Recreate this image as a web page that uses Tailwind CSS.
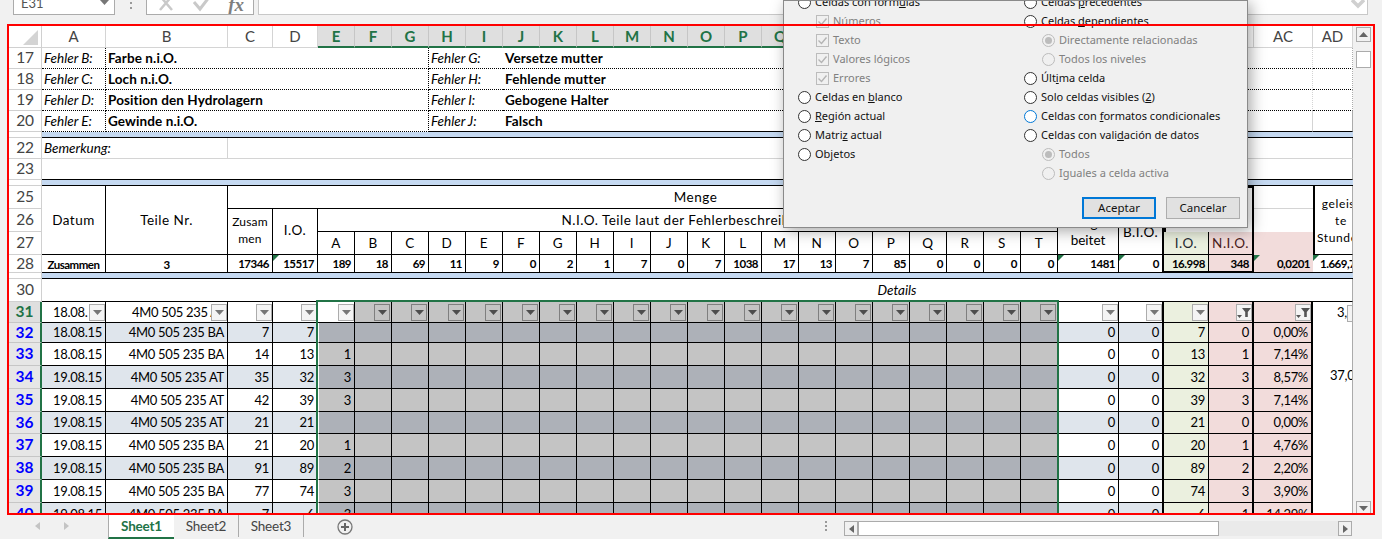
<!DOCTYPE html>
<html lang="en">
<head>
<meta charset="UTF-8">
<title>Excel sheet</title>
<script src="https://cdn.jsdelivr.net/npm/@tailwindcss/browser@4"></script>
</head>
<body class="bg-[#f1f1f1] overflow-hidden">
<div id="page" class="relative w-[1382px] h-[539px] overflow-hidden bg-[#f1f1f1] font-['Lato',sans-serif] text-black">

  <!-- formula bar, cut off by the top of the picture -->
  <div class="h-[26px] pl-[13px] flex items-start gap-[4px] text-[#555]">
    <div class="w-[102px] h-[15px] bg-white border border-t-0 border-[#ababab] flex items-end justify-between px-[7px] overflow-hidden">
      <span class="text-[13px] leading-[15px] mb-[3px]">E31</span>
      <svg width="9" height="5" viewBox="0 0 9 5" class="mb-[9px] mr-[-2px]"><path d="M0 0h9L4.500 5z" fill="#777"/></svg>
    </div>
    <div class="w-[23px] h-[15px] flex justify-center gap-0 text-[#888]">
      <div class="flex flex-col gap-[3px] pt-[2px]"><span class="w-[2px] h-[2px] bg-[#999]"></span><span class="w-[2px] h-[2px] bg-[#999]"></span></div>
    </div>
    <div class="w-[108px] h-[15px] bg-white border border-t-0 border-[#ababab] flex items-start justify-between pl-[10px] pr-[9px] overflow-hidden">
      <svg width="18" height="12" viewBox="0 0 18 12"><path d="M3-4 15 10M15-4 3 10" stroke="#c9c9c9" stroke-width="2.500" fill="none"/></svg>
      <svg width="20" height="12" viewBox="0 0 20 12"><path d="M2 2l6 7L18-4" stroke="#c9c9c9" stroke-width="3" fill="none"/></svg>
      <span class="font-['Liberation_Serif',serif] italic font-bold text-[19px] leading-[10px] text-[#7f7f7f]">fx</span>
    </div>
    <div class="w-[1110px] h-[15px] bg-white border border-t-0 border-[#c8c8c8] flex justify-end pr-[2px]">
      <svg width="14" height="12" viewBox="0 0 14 12"><path d="M1 0l6 6 6-6" stroke="#d0d0d0" stroke-width="3.500" fill="none"/></svg>
    </div>
  </div>

  <!-- sheet + vertical scrollbar -->
  <div class="flex h-[489px]">
    <div id="sheet" class="ml-[9px] w-[1344px] h-[489px] overflow-hidden bg-white grid grid-cols-[33px_64px_122px_45px_45px_repeat(20,37px)_61px_45px_45px_45px_59px_40px] grid-rows-[22px_21px_21px_21px_21px_6px_21px_21px_6px_23px_23px_23px_18px_6px_23px_21px_20px_23px_23px_23px_22px_23px_23px_23px_23px]"></div>
    <div class="w-[29px] pl-[3px] pt-[1px] flex flex-col">
      <div class="w-[15px] h-[15px] border border-[#ababab] bg-[#f1f1f1] flex items-center justify-center">
        <svg width="9" height="5" viewBox="0 0 9 5"><path d="M0 5h9L4.500 0z" fill="#666"/></svg>
      </div>
      <div class="w-[15px] h-[17px] mt-[9px] border border-[#ababab] bg-white"></div>
      <div class="flex-1"></div>
      <div class="w-[15px] h-[14px] border border-[#ababab] bg-[#f1f1f1] flex items-center justify-center">
        <svg width="9" height="5" viewBox="0 0 9 5"><path d="M0 0h9L4.500 5z" fill="#666"/></svg>
      </div>
    </div>
  </div>

  <!-- tabs + horizontal scrollbar -->
  <div class="h-[24px] flex items-start text-[13.500px] tracking-[-0.2px] text-[#444]">
    <div class="w-[108px] h-[22px] flex items-center gap-[24px] pl-[35px]">
      <svg width="5" height="8" viewBox="0 0 5 8"><path d="M5 0v8L0 4z" fill="#c4c4c4"/></svg>
      <svg width="5" height="8" viewBox="0 0 5 8"><path d="M0 0v8l5-4z" fill="#c4c4c4"/></svg>
    </div>
    <div class="w-[66px] h-[24px] bg-white border-l border-[#ababab] border-b-2 border-b-[#217346] flex items-center justify-center font-bold text-[#217346]">Sheet1</div>
    <div class="w-[65px] h-[22px] border-r border-[#ababab] flex items-center justify-center">Sheet2</div>
    <div class="w-[65px] h-[22px] border-r border-[#ababab] flex items-center justify-center">Sheet3</div>
    <div class="w-[33px]"></div>
    <svg width="16" height="16" viewBox="0 0 16 16" class="mt-[4px]"><circle cx="8" cy="8" r="7" fill="none" stroke="#777" stroke-width="1.300"/><path d="M8 4v8M4 8h8" stroke="#666" stroke-width="2"/></svg>
    <div class="w-[491px] h-[22px] flex justify-end items-center pr-[17px]">
      <div class="flex flex-col gap-[2px]"><span class="w-[2px] h-[2px] bg-[#999]"></span><span class="w-[2px] h-[2px] bg-[#999]"></span><span class="w-[2px] h-[2px] bg-[#999]"></span></div>
    </div>
    <div class="w-[508px] h-[15px] mt-[6px] flex bg-[#f1f1f1]">
      <div class="w-[14px] border border-[#ababab] flex items-center justify-center"><svg width="5" height="8" viewBox="0 0 5 8"><path d="M5 0v8L0 4z" fill="#666"/></svg></div>
      <div class="w-[361px] bg-white border border-[#ababab]"></div>
      <div class="flex-1 bg-[#eaeaea]"></div>
      <div class="w-[14px] border border-[#ababab] flex items-center justify-center"><svg width="5" height="8" viewBox="0 0 5 8"><path d="M0 0v8l5-4z" fill="#666"/></svg></div>
    </div>
  </div>

  <!-- selection outline E31:X40, runs on below the visible rows -->
  <div class="absolute left-[316px] top-[300px] w-[743px] h-[214px] border-2 border-b-0 border-[#217346] pointer-events-none"></div>

  <!-- Ir a Especial dialog -->
  <div id="dialog" class="absolute left-[783px] top-0 w-[465px] h-[228px] bg-[#f0f0f0] border border-[#8a8a8a] shadow-[3px_3px_14px_rgba(0,0,0,0.35)] overflow-hidden font-['Noto_Sans',sans-serif] text-[11px] text-[#111]">
    <div class="flex -mt-[8px]">
      <div id="dlgLeft" class="w-[226px] pl-[14px] flex flex-col"></div>
      <div id="dlgRight" class="flex-1 pl-[14px] flex flex-col"></div>
    </div>
    <div class="absolute right-[7px] bottom-[8px] flex gap-[10px] text-[11.500px]">
      <div class="w-[74px] h-[22px] bg-[#e1e1e1] border-2 border-[#0078d7] flex items-center justify-center">Aceptar</div>
      <div class="w-[74px] h-[22px] bg-[#e1e1e1] border border-[#adadad] flex items-center justify-center">Cancelar</div>
    </div>
  </div>

  <!-- red marker frame from the screenshot -->
  <div class="absolute left-[7px] top-[24px] w-[1368px] h-[491px] border-2 border-[#ff0000] pointer-events-none"></div>
</div>

<script>
  const sheet = document.getElementById('sheet');

  // adds one grid cell
  function cell(cls, html) {
    const d = document.createElement('div');
    d.className = cls;
    d.innerHTML = html === undefined ? '' : html;
    sheet.appendChild(d);
    return d;
  }

  const BASE = 'relative flex items-center overflow-hidden whitespace-nowrap pt-[1px] ';
  const SIZE = 'text-[13px] tracking-[-0.3px] ';
  const BOX = 'border-b border-r border-black ';
  const RIGHT = BASE + 'justify-end pr-[3px] ' + BOX;
  const NUM = RIGHT + SIZE;
  const MID = BASE + 'justify-center text-center leading-[17px] ' + BOX;
  const BOLD = 'text-[11.500px] tracking-[-0.5px] font-bold ';
  const HEAD = 'text-[13.500px] tracking-[0.5px] ';
  const TICK = '<span class="absolute left-0 top-0 w-0 h-0 border-t-[6px] border-r-[6px] border-t-[#217346] border-r-transparent"></span>';

  function rowHead(label) {
    cell('flex items-center justify-center bg-white border-r border-b border-[#d0d0d0] text-[15.500px] tracking-[-0.3px] text-[#444] overflow-hidden', label);
  }

  function filterBtn(dark, funnel) {
    const box = dark
      ? 'absolute right-[1px] bottom-[1px] w-[16px] h-[17px] border border-[#7f7f7f] flex items-center justify-center'
      : 'absolute right-0 bottom-[1px] w-[16px] h-[17px] bg-[#f4f4f4] border border-[#acacac] flex items-center justify-center';
    const icon = funnel
      ? '<svg width="14" height="11" viewBox="0 0 14 11"><path d="M0 8h5L2.500 11zM5 1h9L10.800 5v5H8.200V5z" fill="#555"/></svg>'
      : '<svg width="9" height="5" viewBox="0 0 9 5"><path d="M0 0h9L4.500 5z" fill="' + (dark ? '#4d4d4d' : '#777') + '"/></svg>';
    return '<span class="' + box + '">' + icon + '</span>';
  }

  // column letters
  cell('relative bg-white border-r border-b border-[#d0d0d0]', '<svg class="absolute right-[3px] bottom-[2px]" width="15" height="15" viewBox="0 0 15 15"><path d="M15 0v15H0z" fill="#d4d4d4"/></svg>');
  const columns = ['A','B','C','D','E','F','G','H','I','J','K','L','M','N','O','P','Q','R','S','T','U','V','W','X','Y','Z','AA','AB','AC','AD'];
  columns.forEach((c, i) => {
    const selected = i >= 4 && i <= 23;
    cell(selected
      ? 'flex items-center justify-center bg-[#dfdfdf] border-r border-[#c6c6c6] border-b-2 border-b-[#217346] text-[15px] font-bold text-[#217346]'
      : 'flex items-center justify-center bg-white border-r border-b border-[#d4d4d4] text-[15px] text-[#444]', c);
  });

  // rows 17-20: error legend
  const legend = [
    ['17','Fehler B:','Farbe n.i.O.','Fehler G:','Versetze mutter'],
    ['18','Fehler C:','Loch n.i.O.','Fehler H:','Fehlende mutter'],
    ['19','Fehler D:','Position den Hydrolagern','Fehler I:','Gebogene Halter'],
    ['20','Fehler E:','Gewinde n.i.O.','Fehler J:','Falsch']
  ];
  legend.forEach((r, i) => {
    const line = i === 3 ? 'border-b border-b-black ' : 'border-b border-dotted border-b-black ';
    const edge = 'border-r border-dotted border-r-black ';
    const txt = 'flex items-center overflow-hidden whitespace-nowrap pt-[1px] pl-[2px] ';
    rowHead(r[0]);
    cell(txt + line + edge + 'italic text-[13.500px]', r[1]);
    cell('col-span-6 ' + txt + line + edge + 'font-bold text-[13.500px] tracking-[0.1px]', r[2]);
    cell('col-span-2 ' + txt + line + 'italic text-[13.500px]', r[3]);
    cell('col-span-20 pl-[2px] pt-[1px] border-r border-r-[#d4d4d4] flex items-center overflow-hidden whitespace-nowrap ' + line + 'font-bold text-[13.500px] tracking-[0.1px]', r[4]);
    cell(line + 'border-r border-r-[#ababab]');
  });

  // rows 21-24
  function blueRow() {
    rowHead('');
    cell('col-span-30 bg-[#c5d9f1] border-b border-black');
  }
  blueRow();
  rowHead('22');
  cell('col-span-2 flex items-center pt-[1px] pl-[2px] italic text-[13.500px] border-r border-b border-[#d4d4d4]', 'Bemerkung:');
  cell('col-span-28 border-b border-[#d4d4d4] border-r border-r-[#ababab]');
  rowHead('23');
  cell('col-span-30 border-b border-black border-r border-r-[#ababab]');
  blueRow();

  // rows 25-28: table head
  rowHead('25');
  cell('row-span-3 ' + MID + HEAD, 'Datum');
  cell('row-span-3 ' + MID + HEAD, 'Teile Nr.');
  cell('col-span-24 ' + MID + HEAD, 'Menge');
  cell('col-span-2 row-span-2 border-t-2 border-x-2 border-black');
  cell('border-b border-[#d4d4d4]');
  cell('row-span-3 ' + BASE + 'justify-start text-center leading-[17px] pl-[2px] border-b border-l-2 border-black border-r border-r-[#ababab] text-[12px] tracking-[0.6px]', '<span>geleist<br>te<br>Stunden</span>');

  rowHead('26');
  cell('row-span-2 ' + MID + 'text-[12px] tracking-[0.2px] pb-[4px]', 'Zusam<br>men');
  cell('row-span-2 ' + MID + HEAD + 'pb-[4px]', 'I.O.');
  cell('col-span-20 ' + MID + HEAD, 'N.I.O. Teile laut der Fehlerbeschreibung');
  cell('row-span-2 ' + MID + 'text-[13.500px]', 'Nachgear<br>beitet');
  cell('row-span-2 ' + MID + 'border-r-2 ' + HEAD, 'B.I.O.');
  cell('');

  rowHead('27');
  ['A','B','C','D','E','F','G','H','I','J','K','L','M','N','O','P','Q','R','S','T'].forEach(c => cell(MID + HEAD, c));
  cell(MID + 'bg-[#ebf0df] ' + HEAD + 'text-[#1f2a33]', 'I.O.');
  cell(MID + 'bg-[#f2dcdb] border-r-2 ' + HEAD + 'text-[#4a2020]', 'N.I.O.');
  cell('bg-[#f2dcdb]');

  rowHead('28');
  cell(MID + BOLD, 'Zusammen');
  cell(MID + BOLD, '3');
  cell(RIGHT + BOLD, '17346');
  cell(RIGHT + BOLD, TICK + '15517');
  [189,18,69,11,9,0,2,1,7,0,7,1038,17,13,7,85,0,0,0,0].forEach(v => cell(RIGHT + BOLD, v));
  cell(RIGHT + BOLD, TICK + '1481');
  cell(RIGHT + BOLD + 'border-r-2', TICK + '0');
  cell(RIGHT + BOLD + 'bg-[#ebf0df] border-b-2', '16.998');
  cell(RIGHT + BOLD + 'bg-[#f2dcdb] border-r-2 border-b-2', '348');
  cell(RIGHT + BOLD + 'bg-[#f2dcdb] border-r-0', TICK + '0,0201');
  cell(BASE + BOLD + 'pl-[7px] border-b border-black border-r border-r-[#ababab]', TICK + '1.669,7');

  blueRow();

  // row 30
  rowHead('30');
  cell('col-span-30 flex items-center justify-center pl-[400px] italic text-[13.500px] border-b border-black border-r border-r-[#ababab]', 'Details');

  // row 31: filter buttons
  cell('flex items-center justify-center bg-[#dfdfdf] border-b border-[#c6c6c6] border-r-2 border-r-[#217346] text-[15.500px] font-bold text-[#217346]', '31');
  cell(BASE + SIZE + 'pl-[11px] ' + BOX, '18.08.' + filterBtn(false));
  cell(BASE + SIZE + 'pl-[26px] ' + BOX, '4M0 505 235 A' + filterBtn(false));
  cell(NUM, filterBtn(false));
  cell(NUM, filterBtn(false));
  for (let i = 0; i < 20; i++) {
    cell(NUM + (i === 0 ? 'bg-white' : 'bg-[#c4c4c4]'), filterBtn(i > 0));
  }
  cell(NUM, filterBtn(false));
  cell(NUM + 'border-r-2', filterBtn(false));
  cell(NUM + 'bg-[#ebf0df]', filterBtn(false));
  cell(NUM + 'bg-[#f2dcdb] border-r-2', filterBtn(false, true));
  cell(NUM + 'bg-[#f2dcdb] border-r-2', filterBtn(false, true));
  cell(BASE + SIZE + 'pl-[24px] border-r border-r-[#ababab]', '3,<span class="absolute left-[34px] bottom-[1px] w-[16px] h-[17px] bg-[#f4f4f4] border border-[#acacac]"></span>');

  // rows 32-40: data
  const data = [
    ['32','18.08.15','4M0 505 235 BA',7,7,'',7,0,'0,00%',''],
    ['33','18.08.15','4M0 505 235 BA',14,13,1,13,1,'7,14%',''],
    ['34','19.08.15','4M0 505 235 AT',35,32,3,32,3,'8,57%','37,0'],
    ['35','19.08.15','4M0 505 235 AT',42,39,3,39,3,'7,14%',''],
    ['36','19.08.15','4M0 505 235 AT',21,21,'',21,0,'0,00%',''],
    ['37','19.08.15','4M0 505 235 BA',21,20,1,20,1,'4,76%',''],
    ['38','19.08.15','4M0 505 235 BA',91,89,2,89,2,'2,20%',''],
    ['39','19.08.15','4M0 505 235 BA',77,74,3,74,3,'3,90%',''],
    ['40','19.08.15','4M0 505 235 BA',7,6,3,6,1,'14,29%','']
  ];
  data.forEach((r, i) => {
    const band = i % 2 === 0;
    const bg = band ? 'bg-[#dfe5ec] ' : 'bg-white ';
    const gray = band ? 'bg-[#adb1b8] ' : 'bg-[#c4c4c4] ';
    cell('flex items-center justify-center bg-[#e6e6e6] border-b border-[#c6c6c6] border-r-2 border-r-[#217346] text-[15.500px] font-bold text-[#0000ff]', r[0]);
    cell(NUM + bg, r[1]);
    cell(NUM + bg, r[2]);
    cell(NUM + bg, r[3]);
    cell(NUM + bg, r[4]);
    for (let c = 0; c < 20; c++) {
      cell(NUM + gray + (c === 0 ? 'border-l border-l-white' : ''), c === 0 ? r[5] : '');
    }
    cell(NUM + bg, 0);
    cell(NUM + bg + 'border-r-2', 0);
    cell(NUM + 'bg-[#ebf0df]', r[6]);
    cell(NUM + 'bg-[#f2dcdb] border-r-2', r[7]);
    cell(NUM + 'bg-[#f2dcdb] border-r-2', r[8]);
    cell('relative overflow-hidden whitespace-nowrap pl-[17px] ' + SIZE + 'border-r border-r-[#ababab]', r[9]);
  });

  // dialog options
  const radio = '<span class="w-[13px] h-[13px] rounded-full border border-[#333] bg-white shrink-0"></span>';
  const radioFocus = '<span class="w-[13px] h-[13px] rounded-full border border-[#0078d7] bg-white shrink-0"></span>';
  const radioOff = '<span class="w-[13px] h-[13px] rounded-full border border-[#bcbcbc] bg-[#f0f0f0] shrink-0"></span>';
  const radioOn = '<span class="w-[13px] h-[13px] rounded-full border border-[#bcbcbc] bg-[#f0f0f0] shrink-0 flex items-center justify-center"><span class="w-[7px] h-[7px] rounded-full bg-[#bcbcbc]"></span></span>';
  const check = '<span class="w-[13px] h-[13px] border border-[#bcbcbc] shrink-0 flex items-center justify-center"><svg width="11" height="11" viewBox="0 0 11 11"><path d="M1.500 5.500l3 3 5-6" fill="none" stroke="#b4b4b4" stroke-width="1.400"/></svg></span>';

  function option(target, mark, label, sub) {
    const row = document.createElement('div');
    row.className = 'h-[19px] flex items-center whitespace-nowrap ' + (sub ? 'ml-[18px] gap-[4px] text-[#808080]' : 'gap-[4px]');
    row.innerHTML = mark + '<span>' + label + '</span>';
    document.getElementById(target).appendChild(row);
  }
  option('dlgLeft', radio, 'Celdas con fórm<u>u</u>las');
  option('dlgLeft', check, 'Números', true);
  option('dlgLeft', check, 'Texto', true);
  option('dlgLeft', check, 'Valores lógicos', true);
  option('dlgLeft', check, 'Errores', true);
  option('dlgLeft', radio, 'Celdas en <u>b</u>lanco');
  option('dlgLeft', radio, '<u>R</u>egión actual');
  option('dlgLeft', radio, 'Matri<u>z</u> actual');
  option('dlgLeft', radio, 'Ob<u>j</u>etos');
  option('dlgRight', radio, 'Celdas <u>p</u>recedentes');
  option('dlgRight', radio, 'Celdas <u>d</u>ependientes');
  option('dlgRight', radioOn, 'Directamente relacionadas', true);
  option('dlgRight', radioOff, 'Todos los niveles', true);
  option('dlgRight', radio, 'Últ<u>i</u>ma celda');
  option('dlgRight', radio, 'Solo celdas visibles (<u>2</u>)');
  option('dlgRight', radioFocus, 'Celdas con <u>f</u>ormatos condicionales');
  option('dlgRight', radio, 'Celdas con vali<u>d</u>ación de datos');
  option('dlgRight', radioOn, 'Todos', true);
  option('dlgRight', radioOff, 'Iguales a celda activa', true);
</script>
</body>
</html>
